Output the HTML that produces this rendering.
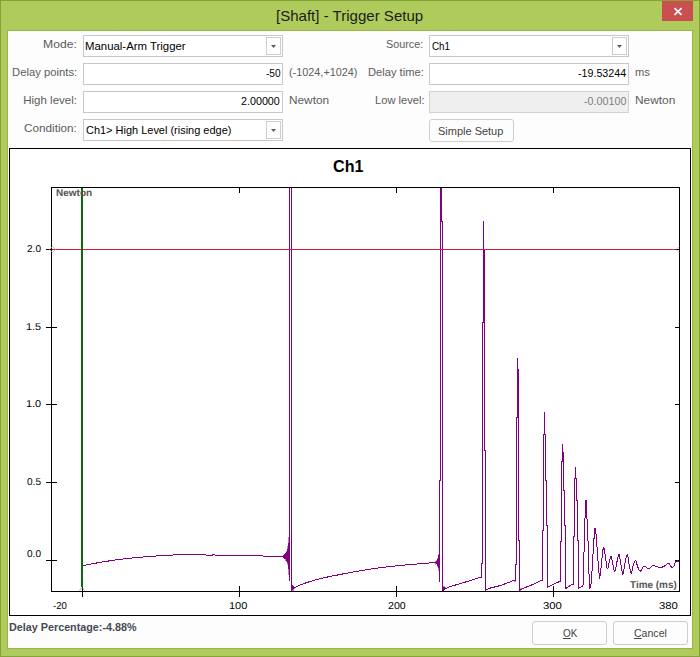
<!DOCTYPE html>
<html><head><meta charset="utf-8"><title>[Shaft] - Trigger Setup</title>
<style>
html,body{margin:0;padding:0;}
body{width:700px;height:657px;overflow:hidden;background:#afcb5c;position:relative;font-family:"Liberation Sans",sans-serif;font-size:11.5px;color:#000;}
.frame{position:absolute;left:0;top:0;width:698px;height:655px;border:1px solid #85a238;}
.t{position:absolute;line-height:1;white-space:nowrap;transform-origin:0 0;}
.close{position:absolute;left:662px;top:1px;width:31px;height:20px;background:#c9504f;}
.client{position:absolute;left:8px;top:31px;width:684px;height:617px;background:#fdfdfd;box-shadow:0 0 0 1px rgba(60,80,0,0.18);}
.inp{position:absolute;width:198px;height:20px;border:1px solid #c8c8c8;background:#fff;}
.inp.dis{background:#efefef;border-color:#d2d2d2;}
.dd{position:absolute;right:1px;top:1px;width:13px;height:16px;border:1px solid #cdcdcd;background:#fff;}
.dd:after{content:"";position:absolute;left:4px;top:7px;width:5px;height:3px;background:#5a5a5a;clip-path:polygon(0 0,100% 0,50% 100%);}
.btn{position:absolute;border:1px solid #cdcdcd;border-radius:3px;background:#fdfdfd;}
.chart{position:absolute;left:9px;top:148px;width:680px;height:466px;border:1px solid #000;background:#fff;}
.plot{position:absolute;left:0;top:0;}
u{text-decoration:underline;}
</style></head><body>
<div class="frame"></div>
<span class="t" style="left:276.30px;top:8px;font-size:15px;color:#1c1c1c;transform:scale(1.0028,1)">[Shaft] - Trigger Setup</span>
<div class="close"><svg width="31" height="20" viewBox="0 0 31 20"><path d="M12.5 7.2 L19.5 13.9 M19.5 7.2 L12.5 13.9" stroke="#fff" stroke-width="1.7" fill="none"/></svg></div>
<div class="client"></div>

<span class="t" style="left:43.44px;top:39px;font-size:11.5px;color:#5c5c5c;transform:scale(1.0583,1)">Mode:</span><span class="t" style="left:11.52px;top:67px;font-size:11.5px;color:#5c5c5c;transform:scale(0.9808,1)">Delay points:</span><span class="t" style="left:23.25px;top:95px;font-size:11.5px;color:#5c5c5c;transform:scale(1.0000,1)">High level:</span><span class="t" style="left:24.25px;top:123px;font-size:11.5px;color:#5c5c5c;transform:scale(1.0196,1)">Condition:</span>
<div class="inp" style="left:83px;top:35px;"><span class="t" style="left:1.01px;top:5px;font-size:11.5px;color:#000;transform:scale(0.9901,1)">Manual-Arm Trigger</span><div class="dd"></div></div>
<div class="inp" style="left:83px;top:63px;"><span class="t" style="left:181.50px;top:4px;font-size:11.5px;color:#000;transform:scale(0.8750,1)">-50</span></div>
<div class="inp" style="left:83px;top:91px;"><span class="t" style="left:157.25px;top:4px;font-size:11.5px;color:#000;transform:scale(0.9329,1)">2.00000</span></div>
<div class="inp" style="left:83px;top:119px;"><span class="t" style="left:2.00px;top:5px;font-size:11.5px;color:#000;transform:scale(0.9539,1)">Ch1&gt; High Level (rising edge)</span><div class="dd"></div></div>
<span class="t" style="left:289.06px;top:67px;font-size:11.5px;color:#5c5c5c;transform:scale(0.9437,1)">(-1024,+1024)</span><span class="t" style="left:288.97px;top:95px;font-size:11.5px;color:#5c5c5c;transform:scale(1.0270,1)">Newton</span>

<span class="t" style="left:385.81px;top:39px;font-size:11.5px;color:#5c5c5c;transform:scale(0.9408,1)">Source:</span><span class="t" style="left:367.78px;top:67px;font-size:11.5px;color:#5c5c5c;transform:scale(0.9688,1)">Delay time:</span><span class="t" style="left:374.53px;top:95px;font-size:11.5px;color:#5c5c5c;transform:scale(0.9694,1)">Low level:</span>
<div class="inp" style="left:429px;top:35px;"><span class="t" style="left:2.10px;top:5px;font-size:11.5px;color:#000;transform:scale(0.8524,1)">Ch1</span><div class="dd"></div></div>
<div class="inp" style="left:429px;top:63px;"><span class="t" style="left:148.00px;top:4px;font-size:11.5px;color:#000;transform:scale(0.9279,1)">-19.53244</span></div>
<div class="inp dis" style="left:429px;top:91px;"><span class="t" style="left:154.25px;top:4px;font-size:11.5px;color:#808080;transform:scale(0.9333,1)">-0.00100</span></div>
<span class="t" style="left:634.79px;top:67px;font-size:11.5px;color:#5c5c5c;transform:scale(0.9643,1)">ms</span><span class="t" style="left:634.97px;top:95px;font-size:11.5px;color:#5c5c5c;transform:scale(1.0338,1)">Newton</span>
<div class="btn" style="left:429px;top:119px;width:83px;height:21px;"><span class="t" style="left:8.34px;top:6px;font-size:11.5px;color:#444;transform:scale(0.9552,1)">Simple Setup</span></div>

<div class="chart"></div>
<svg class="plot" width="700" height="657" viewBox="0 0 700 657" shape-rendering="crispEdges">
<rect x="51.5" y="187.5" width="628" height="404" fill="#fff" stroke="#000" stroke-width="1"/>
<line x1="46" y1="249.5" x2="57" y2="249.5" stroke="#000" stroke-width="1"/><line x1="675" y1="249.5" x2="679" y2="249.5" stroke="#000" stroke-width="1"/><line x1="46" y1="327.5" x2="57" y2="327.5" stroke="#000" stroke-width="1"/><line x1="675" y1="327.5" x2="679" y2="327.5" stroke="#000" stroke-width="1"/><line x1="46" y1="404.5" x2="57" y2="404.5" stroke="#000" stroke-width="1"/><line x1="675" y1="404.5" x2="679" y2="404.5" stroke="#000" stroke-width="1"/><line x1="46" y1="482.5" x2="57" y2="482.5" stroke="#000" stroke-width="1"/><line x1="675" y1="482.5" x2="679" y2="482.5" stroke="#000" stroke-width="1"/><line x1="46" y1="560.5" x2="57" y2="560.5" stroke="#000" stroke-width="1"/><line x1="675" y1="560.5" x2="679" y2="560.5" stroke="#000" stroke-width="1"/><line x1="82.5" y1="586" x2="82.5" y2="597" stroke="#000" stroke-width="1"/><line x1="239.5" y1="586" x2="239.5" y2="597" stroke="#000" stroke-width="1"/><line x1="396.5" y1="586" x2="396.5" y2="597" stroke="#000" stroke-width="1"/><line x1="553.5" y1="586" x2="553.5" y2="597" stroke="#000" stroke-width="1"/><line x1="239.5" y1="187" x2="239.5" y2="193" stroke="#000" stroke-width="1"/><line x1="396.5" y1="187" x2="396.5" y2="193" stroke="#000" stroke-width="1"/><line x1="553.5" y1="187" x2="553.5" y2="193" stroke="#000" stroke-width="1"/>
<polyline points="83.5,565.5 86.48,564.92 90.75,564.09 95.64,563.16 100.5,562.3 104.31,561.67 108.28,561.04 112.36,560.43 116.45,559.84 120.5,559.3 124.42,558.82 128.26,558.38 132.14,557.98 136.18,557.59 140.5,557.2 144.44,556.87 148.65,556.54 153,556.22 157.35,555.91 161.56,555.64 165.5,555.4 169.9,555.16 174.1,554.97 178.1,554.82 181.9,554.7 185.5,554.6 191.43,554.51 196.8,554.5 200.5,554.5 211.5,555.5 213.5,554.5 216.5,555.5 255.5,555.5 270.5,556.5 289.5,556.5" fill="none" stroke="#800080" stroke-width="1" /><polyline points="289.5,580.5 289.5,187.5" fill="none" stroke="#800080" stroke-width="1" /><polygon points="280.5,556.5 283,555.5 285,554 286.5,552 287.5,549 288.5,543 288.5,537 289.5,537 289.5,580 288.7,572 288.2,565 287,562 285.5,559.5 283,557.5" fill="#800080" stroke="#800080" stroke-width="0.5"/><polyline points="291.5,187.5 291.5,590.5 293.5,588.5 294.5,587.5 299.06,585.52 305.5,583 310.2,581.48 315.35,579.97 320.5,578.6 325.31,577.47 330.13,576.47 335.5,575.4 339.18,574.67 343.14,573.89 347.26,573.11 351.42,572.33 355.5,571.6 359.42,570.92 363.26,570.27 367.14,569.64 371.18,569.02 375.5,568.4 379.37,567.88 383.43,567.35 387.62,566.83 391.91,566.33 396.22,565.85 400.5,565.4 405,564.98 409.8,564.59 414.62,564.21 419.2,563.87 423.25,563.56 426.5,563.3 431.62,562.77 433.5,562.5 439.5,562.5" fill="none" stroke="#800080" stroke-width="1" /><polyline points="439.5,581.5 439.5,480.5 440.5,480.5 440.5,187.5" fill="none" stroke="#800080" stroke-width="1" /><polygon points="291.5,584 294.5,587.5 292.5,590.5 291.5,590.5" fill="#800080" stroke="#800080" stroke-width="0.5"/><polygon points="433.5,562.5 435.5,561.5 437,560 438,558 438.8,554 439.5,554 439.5,581 438.9,569 438,566.5 437,565 435.5,563.5" fill="#800080" stroke="#800080" stroke-width="0.5"/><polyline points="441.5,187.5 441.5,221.5 442.5,221.5 442.5,590.5 445.5,588.5 450.5,586.5 465.5,582 481.5,577 481.5,563.5 482.5,563.5 482.5,322.5 483.5,322.5 483.5,220.5" fill="none" stroke="#800080" stroke-width="1" /><polygon points="442.5,586 446,588 443.5,590.5 442.5,590.5" fill="#800080" stroke="#800080" stroke-width="0.5"/><polyline points="483.5,220.5 483.5,249.5 484.5,249.5 484.5,450.5 485.5,450.5 485.5,590.5 488.5,588.5 500.5,585.5 510.5,581.8 513.5,580.5 515.5,580.5 515.5,565.5 516.5,563.5 516.5,417.5 517.5,417.5 517.5,357.5" fill="none" stroke="#800080" stroke-width="1" /><polygon points="512.5,580.5 514.5,579.5 515.5,580.5 514.5,581.5" fill="#800080" stroke="#800080" stroke-width="0.5"/><polyline points="517.5,357.5 517.5,369.5 518.5,369.5 518.5,540.5 519.5,540.5 519.5,590.5 522.5,588.5 530.5,585.5 541.5,580.5 542.5,580.5 542.5,530.5 543.5,530.5 543.5,434.5 544.5,434.5 544.5,411.5" fill="none" stroke="#800080" stroke-width="1" /><polygon points="519.5,588 521.5,589.5 520,590.5 519.5,590.5" fill="#800080" stroke="#800080" stroke-width="0.5"/><polyline points="544.5,411.5 544.5,434.5 545.5,434.5 545.5,480.5 546.5,480.5 546.5,525.5 547.5,525.5 547.5,587.5 550.5,585.8 559.5,581.5 560.5,581.5 560.5,541.5 561.5,541.5 561.5,461.5 562.5,461.5 562.5,443.5" fill="none" stroke="#800080" stroke-width="1" /><polyline points="562.5,443.5 562.5,452.5 563.5,452.5 563.5,490.5 564.5,490.5 564.5,525.5 565.5,525.5 565.5,588.5 566.5,588 572.5,584 573.5,584 573.5,536.5 574.5,536.5 574.5,478.5 575.5,478.5 575.5,466.5" fill="none" stroke="#800080" stroke-width="1" /><polyline points="575.5,466.5 575.5,478.5 576.5,478.5 576.5,500.5 577.5,500.5 577.5,540.5 578.5,540.5 578.5,588.5 582.5,586 583.5,584 583.5,564.5 584.5,540.5 584.5,518.5 585.5,517.5 585.5,500.5 586.5,500.5 586.5,517.5 587.5,520.5 588.5,560.5 589.5,587.5" fill="none" stroke="#800080" stroke-width="1" /><polyline points="589.5,587.5 589.77,588.11 590.2,587.8 590.3,587.45 590.4,587.09 590.52,586.68 590.63,586.2 590.76,585.64 590.88,584.95 591.01,584.12 591.14,583.12 591.27,581.92 591.4,580.5 591.44,580.02 591.48,579.51 591.52,578.97 591.56,578.4 591.6,577.81 591.64,577.2 591.68,576.56 591.72,575.91 591.76,575.23 591.81,574.54 591.85,573.83 591.89,573.11 591.93,572.37 591.97,571.62 592.02,570.86 592.06,570.09 592.1,569.31 592.15,568.53 592.19,567.74 592.23,566.95 592.28,566.15 592.32,565.36 592.36,564.57 592.41,563.78 592.45,562.99 592.49,562.21 592.54,561.43 592.58,560.66 592.62,559.91 592.67,559.16 592.71,558.43 592.76,557.71 592.8,557 592.85,556.27 592.89,555.54 592.94,554.79 592.99,554.03 593.04,553.26 593.09,552.49 593.13,551.71 593.18,550.92 593.23,550.14 593.28,549.35 593.34,548.56 593.39,547.77 593.44,546.99 593.49,546.21 593.54,545.44 593.59,544.67 593.64,543.91 593.69,543.16 593.74,542.42 593.78,541.7 593.83,540.99 593.88,540.29 593.93,539.62 593.97,538.96 594.02,538.32 594.06,537.7 594.1,537.1 594.15,536.53 594.19,535.98 594.23,535.46 594.26,534.96 594.3,534.5 594.43,532.85 594.54,531.48 594.64,530.37 594.73,529.51 594.81,528.89 594.9,528.49 594.99,528.3 595.1,528.3 595.19,528.42 595.27,528.65 595.36,529 595.46,529.45 595.55,530.03 595.65,530.72 595.75,531.53 595.86,532.46 595.97,533.51 596.08,534.69 596.2,536 596.24,536.49 596.29,537.01 596.33,537.56 596.38,538.15 596.42,538.75 596.47,539.39 596.52,540.05 596.57,540.72 596.62,541.42 596.67,542.14 596.72,542.87 596.77,543.62 596.82,544.37 596.88,545.14 596.93,545.92 596.98,546.7 597.03,547.49 597.09,548.27 597.14,549.06 597.19,549.85 597.25,550.64 597.3,551.42 597.35,552.19 597.4,552.95 597.45,553.7 597.51,554.44 597.56,555.17 597.61,555.87 597.66,556.56 597.7,557.23 597.75,557.88 597.8,558.5 597.87,559.35 597.93,560.2 598,561.06 598.06,561.91 598.13,562.77 598.2,563.61 598.26,564.45 598.33,565.28 598.39,566.1 598.46,566.9 598.52,567.68 598.59,568.45 598.65,569.2 598.71,569.92 598.77,570.61 598.83,571.28 598.89,571.92 598.95,572.53 599,573.1 599.05,573.64 599.1,574.13 599.15,574.59 599.2,575 599.56,577.32 599.9,576.4 599.98,576.04 600.06,575.59 600.14,575.06 600.23,574.45 600.32,573.78 600.41,573.05 600.5,572.27 600.6,571.44 600.7,570.59 600.8,569.7 600.9,568.81 601,567.9 601.1,567 601.17,566.39 601.23,565.75 601.3,565.07 601.37,564.36 601.44,563.62 601.51,562.87 601.58,562.1 601.66,561.32 601.73,560.54 601.8,559.76 601.87,558.98 601.94,558.21 602.02,557.45 602.09,556.72 602.16,556.01 602.23,555.33 602.3,554.68 602.37,554.08 602.43,553.51 602.5,553 602.66,551.82 602.81,550.75 602.96,549.79 603.11,548.97 603.25,548.31 603.4,547.83 603.55,547.56 603.7,547.5 603.84,547.67 603.98,548.04 604.11,548.59 604.25,549.29 604.4,550.11 604.54,551.02 604.69,551.99 604.84,552.99 605,554 605.09,554.6 605.19,555.25 605.29,555.96 605.39,556.72 605.5,557.5 605.6,558.31 605.71,559.13 605.82,559.95 605.93,560.77 606.03,561.57 606.13,562.34 606.24,563.08 606.33,563.78 606.43,564.42 606.52,565 606.6,565.5 606.88,567.14 607.09,568.29 607.31,568.88 607.6,568.8 607.74,568.52 607.9,568.06 608.06,567.46 608.23,566.74 608.41,565.94 608.59,565.1 608.77,564.25 608.95,563.43 609.13,562.66 609.3,562 609.54,561.06 609.79,560.02 610.03,558.99 610.27,558.05 610.51,557.29 610.76,556.81 611,556.7 611.17,556.88 611.33,557.26 611.5,557.81 611.66,558.49 611.83,559.26 611.99,560.11 612.16,560.98 612.33,561.86 612.51,562.71 612.7,563.5 612.88,564.25 613.06,565.13 613.24,566.09 613.43,567.09 613.63,568.09 613.82,569.04 614.02,569.9 614.22,570.63 614.41,571.19 614.61,571.52 614.8,571.6 614.95,571.45 615.1,571.14 615.25,570.68 615.4,570.09 615.55,569.39 615.71,568.61 615.86,567.78 616.01,566.9 616.16,566 616.31,565.11 616.46,564.24 616.61,563.42 616.75,562.66 616.9,562 617.09,561.18 617.27,560.28 617.46,559.35 617.64,558.42 617.82,557.51 618,556.66 618.18,555.91 618.36,555.28 618.54,554.82 618.72,554.55 618.9,554.5 619.05,554.66 619.2,554.98 619.34,555.45 619.49,556.05 619.63,556.76 619.77,557.55 619.92,558.4 620.06,559.3 620.2,560.22 620.35,561.14 620.5,562.04 620.65,562.9 620.8,563.7 620.93,564.41 621.07,565.21 621.21,566.07 621.35,566.98 621.49,567.91 621.63,568.86 621.77,569.78 621.92,570.68 622.06,571.52 622.2,572.29 622.34,572.96 622.48,573.51 622.62,573.94 622.76,574.21 622.9,574.3 623.04,574.21 623.17,573.94 623.3,573.51 623.43,572.96 623.56,572.29 623.69,571.52 623.82,570.68 623.95,569.78 624.08,568.86 624.21,567.91 624.35,566.98 624.48,566.07 624.62,565.21 624.76,564.41 624.9,563.7 625.07,562.9 625.24,562.02 625.42,561.1 625.6,560.16 625.79,559.22 625.97,558.3 626.15,557.43 626.34,556.63 626.52,555.93 626.7,555.34 626.87,554.89 627.04,554.6 627.2,554.5 627.35,554.6 627.5,554.9 627.64,555.36 627.78,555.96 627.92,556.68 628.05,557.5 628.18,558.38 628.31,559.3 628.44,560.24 628.57,561.18 628.71,562.08 628.85,562.93 629,563.7 629.15,564.47 629.31,565.32 629.46,566.23 629.62,567.17 629.78,568.12 629.94,569.06 630.11,569.96 630.27,570.79 630.44,571.54 630.6,572.18 630.77,572.69 630.93,573.04 631.1,573.2 631.3,573.13 631.49,572.79 631.69,572.24 631.89,571.51 632.09,570.65 632.29,569.71 632.49,568.74 632.69,567.77 632.89,566.86 633.1,566.06 633.3,565.4 633.62,564.47 633.95,563.51 634.28,562.59 634.62,561.78 634.95,561.15 635.28,560.77 635.6,560.7 635.85,560.93 636.09,561.4 636.33,562.06 636.57,562.86 636.81,563.74 637.05,564.65 637.29,565.53 637.54,566.33 637.8,567 638.2,567.91 638.61,568.85 639.03,569.73 639.46,570.47 639.88,570.99 640.3,571.2 640.72,570.99 641.13,570.41 641.55,569.61 641.97,568.73 642.38,567.95 642.8,567.4 643.6,566.84 644.4,566.62 645.3,566.7 645.91,567.01 646.56,567.55 647.24,568.13 647.95,568.58 648.7,568.7 649.26,568.5 649.84,568.09 650.45,567.55 651.07,566.97 651.68,566.41 652.3,565.96 652.9,565.7 653.59,565.64 654.27,565.75 654.95,565.97 655.63,566.24 656.31,566.5 657,566.7 657.69,566.87 658.39,567.06 659.09,567.24 659.8,567.38 660.5,567.44 661.2,567.4 661.91,567.23 662.64,566.94 663.38,566.58 664.09,566.18 664.77,565.78 665.4,565.4 666.07,564.87 666.67,564.23 667.23,563.63 667.79,563.23 668.4,563.2 668.88,563.51 669.38,564.09 669.9,564.84 670.42,565.64 670.92,566.41 671.38,567.03 671.8,567.4 672.57,567.53 673.19,567.07 673.8,566.2 674.08,565.66 674.34,564.96 674.6,564.15 674.87,563.32 675.16,562.54 675.46,561.88 675.8,561.4 676.55,561.02 677.42,561 678.24,561.13 678.8,561.2" fill="none" stroke="#800080" stroke-width="1" />
<line x1="52" y1="249.5" x2="675" y2="249.5" stroke="#c8202a" stroke-width="1"/>
<line x1="82" y1="188" x2="82" y2="587" stroke="#0b6b0b" stroke-width="2"/>
<g shape-rendering="auto" fill="none" stroke-width="0.7">
<path d="M49.5 249.5 L52.5 246.5 L55.5 249.5 L52.5 252.5 Z" stroke="#e0a0a0"/>
<path d="M679 246.5 L676 249.5 L679 252.5" stroke="#e0a0a0"/>
<path d="M79.5 590.5 L82 587.5 L84.5 590.5" stroke="#777"/>
</g>
</svg>
<span class="t" style="left:333.29px;top:159px;font-size:16px;font-weight:bold;color:#000;transform:scale(1.0069,1)">Ch1</span><span class="t" style="left:26.90px;top:245px;font-size:10px;text-rendering:geometricPrecision;color:#000;transform:scale(1.0071,1)">2.0</span><span class="t" style="left:25.82px;top:323px;font-size:10px;text-rendering:geometricPrecision;color:#000;transform:scale(1.0846,1)">1.5</span><span class="t" style="left:25.82px;top:400px;font-size:10px;text-rendering:geometricPrecision;color:#000;transform:scale(1.0846,1)">1.0</span><span class="t" style="left:26.90px;top:478px;font-size:10px;text-rendering:geometricPrecision;color:#000;transform:scale(1.0071,1)">0.5</span><span class="t" style="left:26.90px;top:550px;font-size:10px;text-rendering:geometricPrecision;color:#000;transform:scale(1.0071,1)">0.0</span>
<span class="t" style="left:52.90px;top:602px;font-size:10px;text-rendering:geometricPrecision;color:#000;transform:scale(0.9643,1)">-20</span><span class="t" style="left:228.90px;top:602px;font-size:10px;text-rendering:geometricPrecision;color:#000;transform:scale(1.1000,1)">100</span><span class="t" style="left:387.50px;top:602px;font-size:10px;text-rendering:geometricPrecision;color:#000;transform:scale(1.0625,1)">200</span><span class="t" style="left:543.37px;top:602px;font-size:10px;text-rendering:geometricPrecision;color:#000;transform:scale(1.1333,1)">300</span><span class="t" style="left:658.87px;top:602px;font-size:10px;text-rendering:geometricPrecision;color:#000;transform:scale(1.1333,1)">380</span><span class="t" style="left:56.00px;top:189px;font-size:10px;font-weight:bold;text-rendering:geometricPrecision;color:#555;transform:scale(1.0000,1)">Newton</span><span class="t" style="left:629.50px;top:581px;font-size:10px;font-weight:bold;text-rendering:geometricPrecision;color:#555;transform:scale(0.9947,1)">Time (ms)</span>
<span class="t" style="left:8.62px;top:622px;font-size:11px;font-weight:bold;color:#454a55;transform:scale(0.9798,1)">Delay Percentage:-4.88%</span>
<div class="btn" style="left:532px;top:621px;width:73px;height:22px;"><span class="t" style="left:30.30px;top:6px;font-size:11.5px;color:#444;transform:scale(0.8625,1)"><u>O</u>K</span></div>
<div class="btn" style="left:613px;top:621px;width:73px;height:22px;"><span class="t" style="left:20.30px;top:6px;font-size:11.5px;color:#444;transform:scale(0.9171,1)"><u>C</u>ancel</span></div>
</body></html>
